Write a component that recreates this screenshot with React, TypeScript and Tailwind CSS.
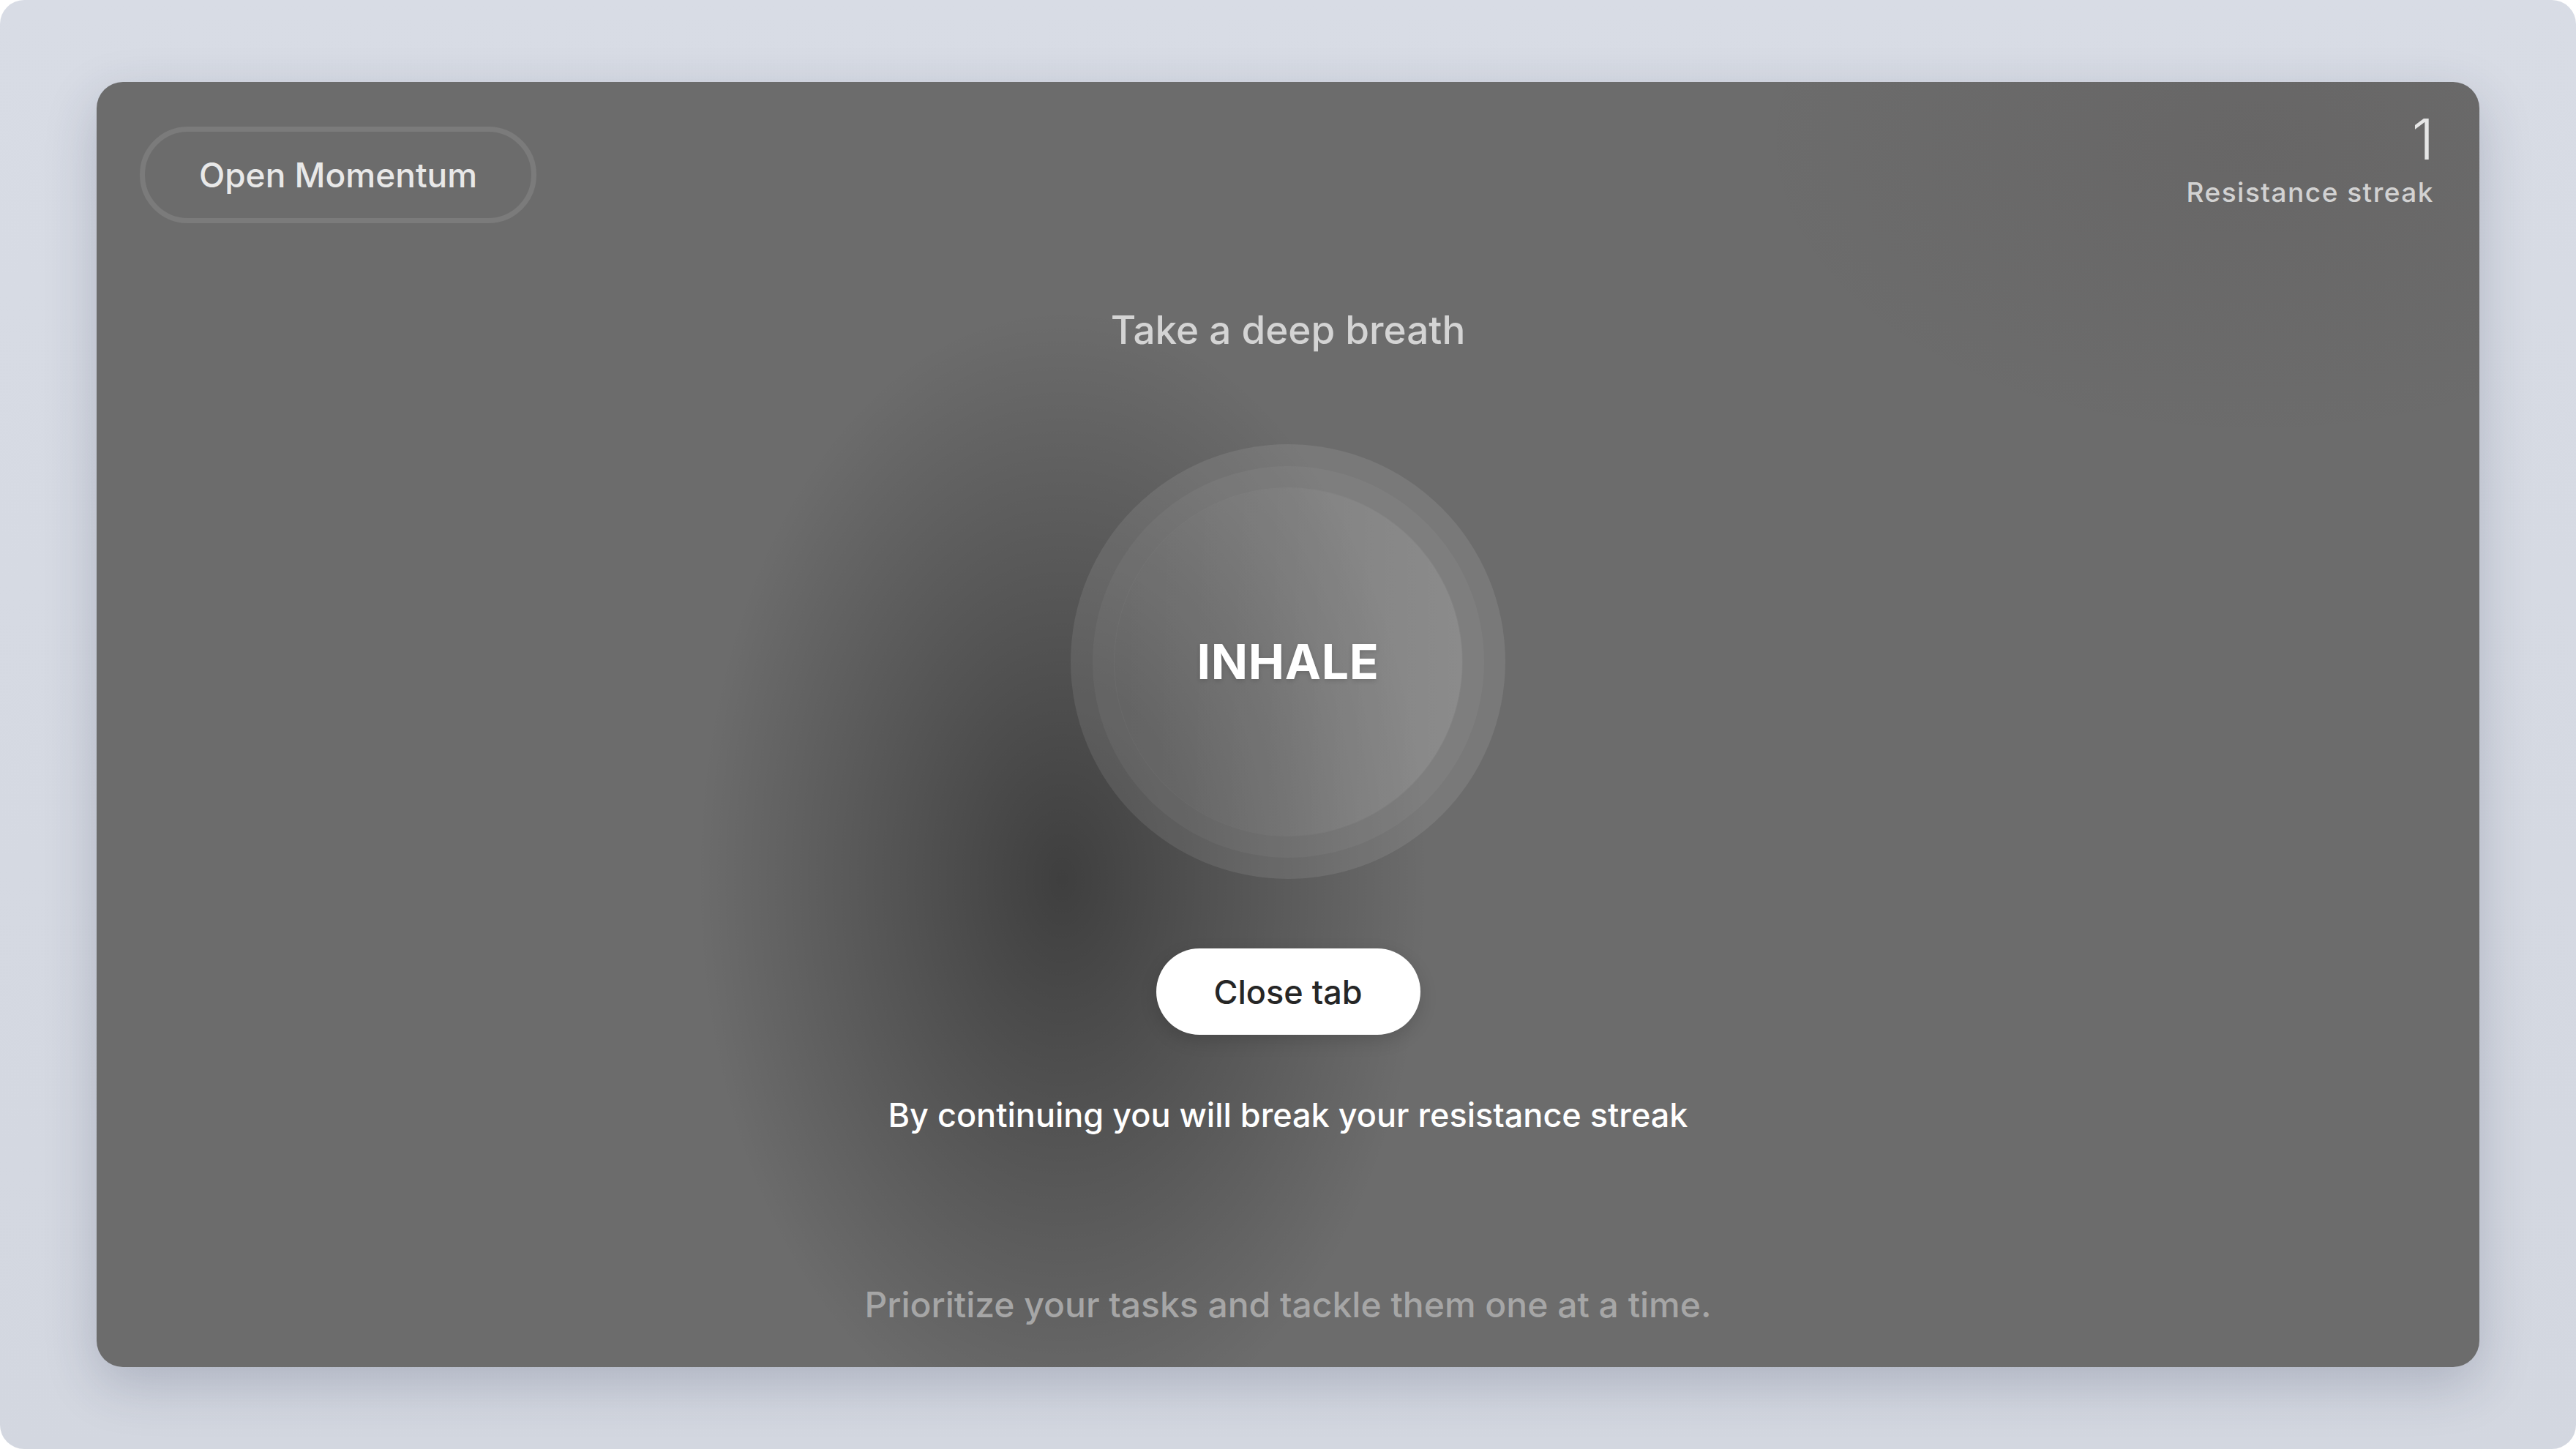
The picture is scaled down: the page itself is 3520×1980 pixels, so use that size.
import React from 'react';

function BreathCircle() {
  return (
    <div className="mt-[129px] flex h-[594px] w-[594px] items-center justify-center rounded-full bg-white/[0.09]">
      <div className="flex h-[535px] w-[535px] items-center justify-center rounded-full bg-white/[0.045]">
        <div className="flex h-[475px] w-[475px] items-center justify-center rounded-full bg-[linear-gradient(90deg,rgba(255,255,255,0)_0%,rgba(255,255,255,0.03)_45%,rgba(255,255,255,0.1)_100%)] shadow-[0_0_0_1px_rgba(255,255,255,0.035)]">
          <span className="text-[66px] font-bold leading-none tracking-[0.01em] text-white [text-shadow:0_2px_6px_rgba(0,0,0,0.15)]">
            INHALE
          </span>
        </div>
      </div>
    </div>
  );
}

export default function App() {
  return (
    <div className="h-screen w-full bg-white font-['Inter','Noto_Sans',sans-serif]">
      <div className="flex h-full w-full flex-col rounded-[33px] bg-[linear-gradient(180deg,#d8dce5_0%,#d3d7e0_100%)] px-[132px] py-[112px]">
        <div className="flex flex-1 flex-col rounded-[36px] bg-[#6c6c6c] bg-[radial-gradient(ellipse_500px_780px_at_1320px_1090px,rgba(0,0,0,0.42)_0%,rgba(0,0,0,0.24)_42%,rgba(0,0,0,0)_100%),radial-gradient(ellipse_700px_420px_at_2950px_80px,rgba(40,25,25,0.07)_0%,rgba(0,0,0,0)_100%)] shadow-[0_24px_70px_rgba(40,50,80,0.22)]">
          <div className="flex items-start justify-between pl-[59px] pr-[62px] pt-[40px]">
            <button className="mt-[21px] flex h-[132px] w-[542px] items-center justify-center rounded-full border-[7px] border-white/10 text-[46px] font-medium leading-none text-[#e8e8e8]">
              Open Momentum
            </button>
            <div className="flex flex-col items-end">
              <span className="text-[77px] font-light leading-none text-[#e6e6e6]">1</span>
              <span className="mt-[15px] text-[37px] font-medium leading-none tracking-[0.04em] text-[#d2d2d2]">
                Resistance streak
              </span>
            </div>
          </div>

          <div className="flex flex-1 flex-col items-center">
            <h1 className="mt-[120px] text-[53px] font-medium leading-none text-[#d4d4d4]">Take a deep breath</h1>

            <BreathCircle />

            <button className="mt-[95px] flex h-[118px] w-[361px] items-center justify-center rounded-full bg-white text-[45px] font-medium leading-none text-[#262626] shadow-[0_8px_24px_rgba(0,0,0,0.14)]">
              Close tab
            </button>

            <p className="mt-[87px] text-[45px] font-medium leading-none text-white">
              By continuing you will break your resistance streak
            </p>

            <p className="mt-auto pb-[61px] text-[48px] font-medium leading-none text-[#a6a6a6]">
              Prioritize your tasks and tackle them one at a time.
            </p>
          </div>
        </div>
      </div>
    </div>
  );
}
